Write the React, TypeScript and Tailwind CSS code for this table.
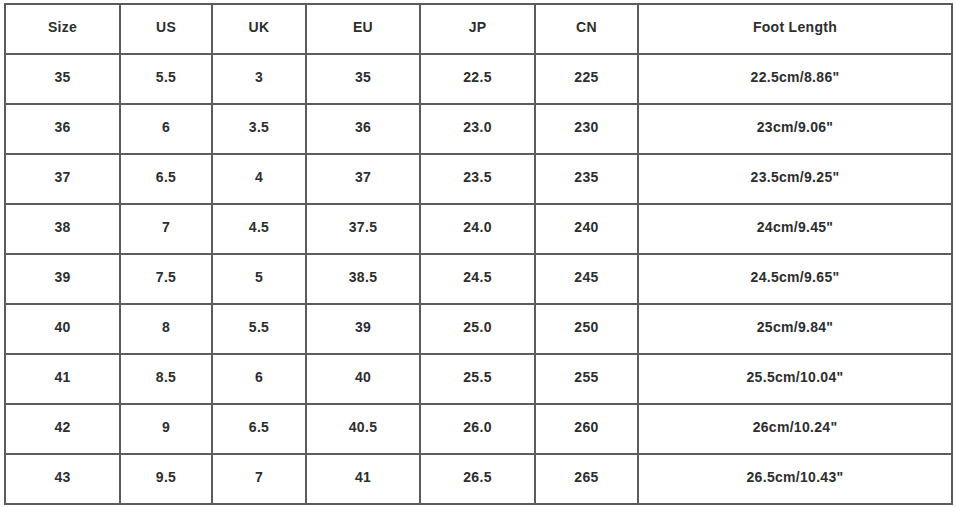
const headers = ['Size', 'US', 'UK', 'EU', 'JP', 'CN', 'Foot Length']

const rows = [
  ['35', '5.5', '3', '35', '22.5', '225', '22.5cm/8.86"'],
  ['36', '6', '3.5', '36', '23.0', '230', '23cm/9.06"'],
  ['37', '6.5', '4', '37', '23.5', '235', '23.5cm/9.25"'],
  ['38', '7', '4.5', '37.5', '24.0', '240', '24cm/9.45"'],
  ['39', '7.5', '5', '38.5', '24.5', '245', '24.5cm/9.65"'],
  ['40', '8', '5.5', '39', '25.0', '250', '25cm/9.84"'],
  ['41', '8.5', '6', '40', '25.5', '255', '25.5cm/10.04"'],
  ['42', '9', '6.5', '40.5', '26.0', '260', '26cm/10.24"'],
  ['43', '9.5', '7', '41', '26.5', '265', '26.5cm/10.43"'],
]

const widths = ['w-[115px]', 'w-[92px]', 'w-[94px]', 'w-[114px]', 'w-[115px]', 'w-[103px]', 'w-[314px]']

function App() {
  return (
    <div className="w-[956px] h-[507px] bg-white pt-[3px] pl-[4px] font-['Liberation_Sans',Arial,sans-serif]">
      <table className="border-collapse table-fixed w-[948px] text-[14px] tracking-[0.3px] font-bold text-[#2e2e2e]">
        <thead>
          <tr className="h-[50px]">
            {headers.map((h, i) => (
              <th key={h} className={`${widths[i]} border-2 border-[#5c5c5c] text-center font-bold pb-[4px]`}>
                {h}
              </th>
            ))}
          </tr>
        </thead>
        <tbody>
          {rows.map((r) => (
            <tr key={r[0]} className="h-[50px]">
              {r.map((c, i) => (
                <td key={i} className={`${widths[i]} border-2 border-[#5c5c5c] text-center pb-[4px]`}>
                  {c}
                </td>
              ))}
            </tr>
          ))}
        </tbody>
      </table>
    </div>
  )
}

export default App
